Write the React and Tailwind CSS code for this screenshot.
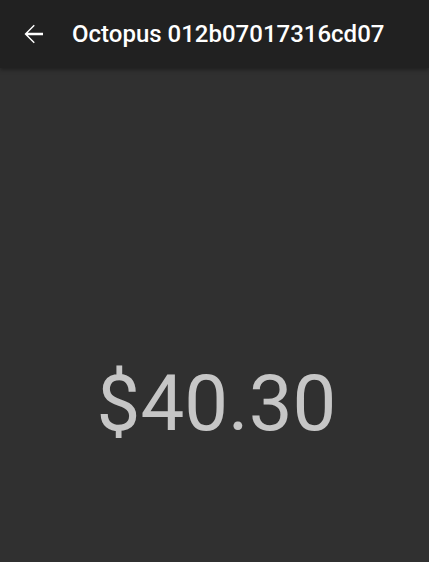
import React from "react";

const BackArrow = () => (
  <svg width="30" height="30" viewBox="0 0 24 24" fill="currentColor">
    <path d="M20 11.05H7.83l5.59-5.59L12.6 4.6 5.2 12l7.4 7.4.82-.86-5.59-5.59H20v-1.9z" />
  </svg>
);

const App = () => {
  const title = "Octopus 012b07017316cd07";
  const balance = "$40.30";

  return (
    <div className="flex h-[562px] w-[429px] flex-col bg-[#303030] font-['Roboto',sans-serif]">
      <header className="relative z-10 flex h-[68px] shrink-0 items-center bg-[#212121] shadow-[0_2px_4px_rgba(0,0,0,0.35)]">
        <button className="ml-[18px] flex h-[30px] w-[30px] items-center justify-center text-white">
          <BackArrow />
        </button>
        <h1 className="ml-[24px] text-[24px] leading-none font-medium text-white">
          {title}
        </h1>
      </header>

      <main className="flex flex-1 items-start justify-center pt-[297px] pl-[4px]">
        <div className="text-[78px] leading-none font-normal text-[#c6c6c6]">
          {balance}
        </div>
      </main>
    </div>
  );
};

export default App;
